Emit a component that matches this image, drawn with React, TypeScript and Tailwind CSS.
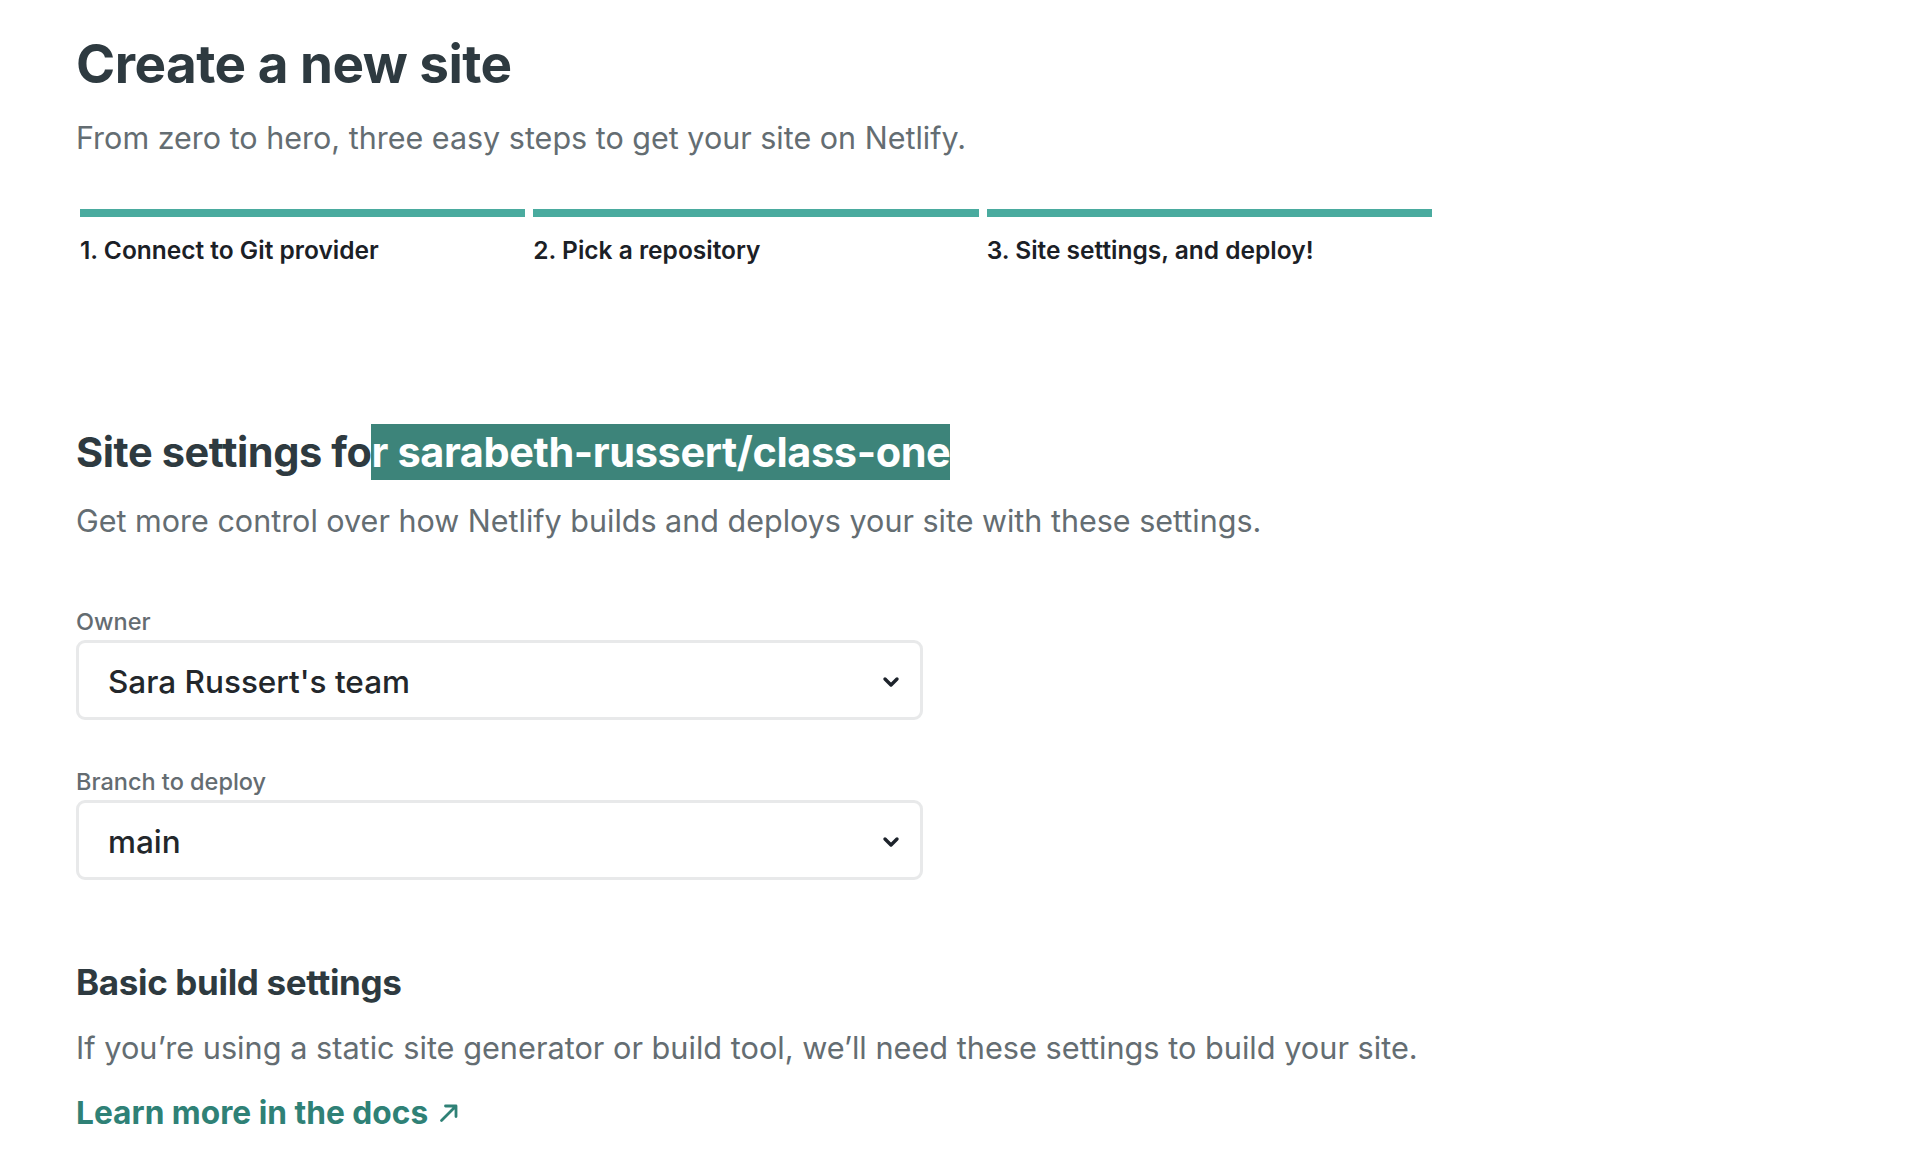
const steps = ['1. Connect to Git provider', '2. Pick a repository', '3. Site settings, and deploy!'];

function Chevron() {
  return (
    <svg width="18" height="12" viewBox="0 0 18 12" fill="none" className="text-[#1d232b]">
      <path d="M3 3l6 6 6-6" stroke="currentColor" strokeWidth="3.4" strokeLinecap="round" strokeLinejoin="round" />
    </svg>
  );
}

function ExternalArrow() {
  return (
    <svg width="22" height="22" viewBox="0 0 22 22" fill="none">
      <path d="M3.5 18.5L18 4M7.5 4H18v10.5" stroke="currentColor" strokeWidth="2.8" strokeLinecap="round" strokeLinejoin="round" />
    </svg>
  );
}

function SelectBox({ label, value }: { label: string; value: string }) {
  return (
    <div>
      <p className="text-[23.5px] leading-[30px] font-medium text-[#646c71]">{label}</p>
      <div className="mt-[3px] flex h-[80px] w-[847px] items-center justify-between rounded-[9px] border-[3px] border-[#e8e9ea] bg-white pt-[3px] pl-[29px] pr-[20px]">
        <span className="text-[31.5px] font-medium text-[#23272b]">{value}</span>
        <Chevron />
      </div>
    </div>
  );
}

export default function App() {
  return (
    <div className="min-h-screen bg-white px-[76px] pt-[38px] font-['Inter',sans-serif]">
      <h1 className="text-[53px] leading-[52px] font-bold tracking-[-0.01em] text-[#2e3a40]">Create a new site</h1>
      <p className="mt-[30px] text-[30.5px] leading-[36px] text-[#646d72]">
        From zero to hero, three easy steps to get your site on Netlify.
      </p>

      <div className="mt-[53px] ml-[4px] grid w-[1352px] grid-cols-3 gap-[8px]">
        {steps.map((s) => (
          <div key={s}>
            <div className="h-[8px] bg-[#4aab9f]" />
            <p className="mt-[17px] text-[24.5px] leading-[32px] font-semibold text-[#1b2026]">{s}</p>
          </div>
        ))}
      </div>

      <h2 className="mt-[158px] text-[41.5px] leading-[56px] font-bold tracking-[-0.01em] text-[#2e3a40]">
        Site settings fo
        <span className="inline-block bg-[#3d847a] text-white">r sarabeth-russert/class-one</span>
      </h2>
      <p className="mt-[23px] text-[30.5px] leading-[36px] text-[#646d72]">
        Get more control over how Netlify builds and deploys your site with these settings.
      </p>

      <div className="mt-[68px] flex flex-col gap-[47px]">
        <SelectBox label="Owner" value="Sara Russert's team" />
        <SelectBox label="Branch to deploy" value="main" />
      </div>

      <h3 className="mt-[81px] text-[35px] leading-[42px] font-bold tracking-[-0.01em] text-[#2e3a40]">Basic build settings</h3>
      <p className="mt-[27px] text-[30.7px] leading-[36px] text-[#646d72]">
        If you’re using a static site generator or build tool, we’ll need these settings to build your site.
      </p>
      <a href="#" className="mt-[29px] inline-flex items-center gap-[10px] text-[31.7px] leading-[36px] font-bold text-[#2f8176]">
        Learn more in the docs
        <ExternalArrow />
      </a>
    </div>
  );
}
